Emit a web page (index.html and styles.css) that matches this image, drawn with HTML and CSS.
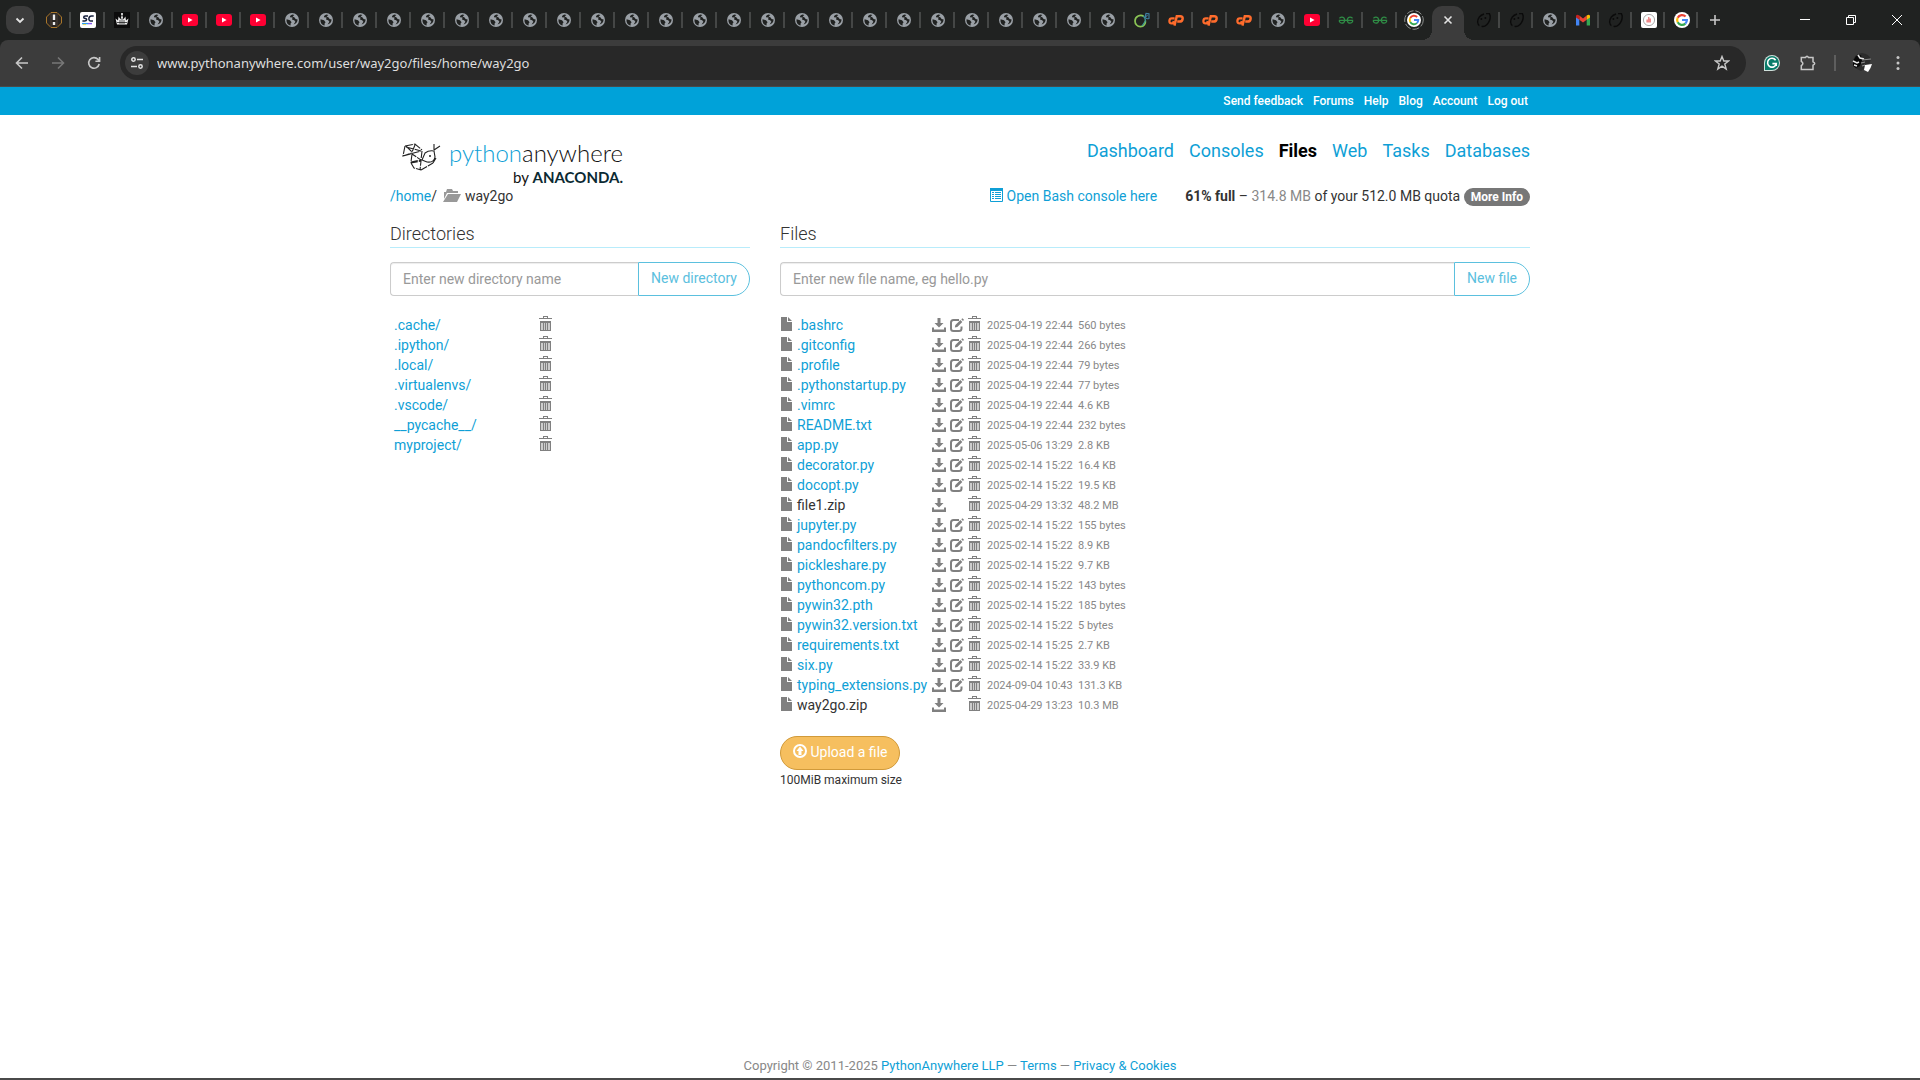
FILE: index.html
```html
<!DOCTYPE html>
<html lang="en">
<head>
	<meta charset="utf-8">
	<title>Files : /home/way2go : PythonAnywhere</title>
	<link rel="stylesheet" href="styles.css">
</head>
<body>

	<!-- icon sprite -->
	<svg class="sprite" aria-hidden="true">
		<symbol id="globe" viewBox="0 0 16 16">
			<circle cx="8" cy="8" r="7" fill="#9aa0a6"/>
			<path d="M2.6 7.2L6 8.2L7.6 10.2L6.6 11.4V13.6C3.8 13 2 10.4 2.6 7.2z" fill="#202221"/>
			<path d="M8.4 2.4C7 3 5.8 3.6 6 5.2L8.6 5.6L8 7.4L10.2 8.2L11.4 9.8L9.6 12.6C12 12 13.6 10 13.6 7.6L11.6 7L10.6 5.4L8.6 4.4L10.4 3z" fill="#202221"/>
		</symbol>
		<symbol id="youtube" viewBox="0 0 16 16">
			<rect x="0" y="2" width="16" height="12" rx="3" fill="#ff0033"/>
			<path d="M6 5.5L10.6 8L6 10.5z" fill="#fff"/>
		</symbol>
		<symbol id="warn" viewBox="0 0 16 16">
			<path d="M5 .5H11L15.5 5V11L11 15.5H5L.5 11V5z" fill="#292522" stroke="#a8762a"/>
			<path d="M5 1V15M11 1V15" stroke="#4a4036"/>
			<path d="M8 2.5V8M8 10V13" stroke="#eee" stroke-width="2.400"/>
		</symbol>
		<symbol id="sc" viewBox="0 0 16 16">
			<rect width="16" height="16" rx="2" fill="#fff"/>
			<path d="M8 4H5.200Q3.700 4 3.700 5.200Q3.700 6.400 5.400 6.500Q6.800 6.700 6.600 7.800Q6.300 9 4.800 9H2.400M13.700 4H11.500Q9.200 4 8.900 6.500Q8.800 9 10.800 9H13" fill="none" stroke="#17213d" stroke-width="1.500"/>
			<path d="M2 11.6H8" stroke="#2c9bf0" stroke-width="1.4"/><path d="M8 11.6H12" stroke="#8a5cf0" stroke-width="1.4"/><path d="M3 12.6H6" stroke="#e6d94c"/>
		</symbol>
		<symbol id="crown" viewBox="0 0 16 16">
			<rect width="16" height="16" fill="#0c0c0c"/>
			<path d="M3 12.5L1.5 6.5L4 8.5L4.6 4.5L6.6 7.5L8 2L9.4 7.5L11.4 4.5L12 8.5L14.5 6.5L13 12.5z" fill="#eee"/>
			<path d="M3 10.5H13M6 8V12M10 8V12M8 6V12" stroke="#0c0c0c" stroke-width=".7"/>
			<circle cx="8" cy="2" r="1" fill="#fff"/>
		</symbol>
		<symbol id="leaf" viewBox="0 0 16 16">
			<path d="M9.6 4.2C6.6 2.2 1 4 1 9C1 12.2 3.4 14.6 6.4 14.6C10 14.6 11.8 11.6 11.4 8.6" fill="none" stroke="#8ac455" stroke-width="1.7"/>
			<path d="M9 4C11 5.2 11.4 7 11.4 9L8 14" fill="none" stroke="#3d9c94" stroke-width="1.2"/>
			<path d="M11 5L12 1.4L15 1.8V6.4Q12.4 7.6 11 5L13.6 3.4" fill="none" stroke="#407fa3" stroke-width="1.1"/>
		</symbol>
		<symbol id="cpanel" viewBox="0 0 16 16">
			<path d="M6.6 6.4H3.8Q1.6 6.4 1.4 8.8Q1.2 11.4 3.6 11.4H5L5.8 9.2" fill="none" stroke="#ff6c2c" stroke-width="2.3"/>
			<path d="M6.4 13.6L8.8 4.2H12.2Q14.9 4.2 14.6 6.8Q14.3 9.6 11.4 9.6H9.2" fill="none" stroke="#ff6c2c" stroke-width="2.5"/>
		</symbol>
		<symbol id="gfg" viewBox="0 0 16 16">
			<path d="M1.4 6.2Q4 4.2 6 6Q7.6 8.4 5.8 10.6Q3 12 1.4 9.6V8.4H14.6V9.6Q13 12 10.2 10.6Q8.4 8.4 10 6Q12 4.2 14.6 6.2" fill="none" stroke="#2f8d46" stroke-width="1.2"/>
		</symbol>
		<symbol id="google" viewBox="0 0 16 16">
			<circle cx="8" cy="8" r="8" fill="#fff"/>
			<g fill="none" stroke-width="2.2">
				<path d="M11.6 4.6A4.9 4.9 0 0 0 3.7 5.7" stroke="#ea4335"/>
				<path d="M3.7 5.7A4.9 4.9 0 0 0 3.7 10.3" stroke="#fbbc05"/>
				<path d="M3.7 10.3A4.9 4.9 0 0 0 11.3 11.6" stroke="#34a853"/>
				<path d="M11.3 11.6A4.9 4.9 0 0 0 12.9 8H8" stroke="#4285f4"/>
			</g>
		</symbol>
		<symbol id="hook" viewBox="0 0 16 16">
			<path d="M8 2Q2 4 1.6 10Q2 13 3.4 13.6M10 1.6H13.4L14.2 4Q14.4 9 11 12.4Q8.4 15 5.6 14.4" fill="none" stroke="#0b0b0b" stroke-width="1.4"/>
			<circle cx="5.4" cy="7" r="1" fill="#0b0b0b"/><circle cx="9.4" cy="6" r="1" fill="#0b0b0b"/>
		</symbol>
		<symbol id="gmail" viewBox="0 0 16 16">
			<path d="M1 4V13.5H4.3V7z" fill="#4285f4"/><path d="M15 4V13.5H11.7V7z" fill="#34a853"/>
			<path d="M4.3 3.5L8 6.4L11.7 3.5V7.8L8 10.6L4.3 7.8z" fill="#ea4335"/>
			<path d="M1 4Q1.6 1.6 4.3 3.5V7.8L1 5.4z" fill="#c5221f"/><path d="M15 4Q14.4 1.6 11.7 3.5V7.8L15 5.4z" fill="#fbbc04"/>
		</symbol>
		<symbol id="seal" viewBox="0 0 16 16">
			<rect width="16" height="16" rx="2" fill="#fff"/>
			<circle cx="8" cy="8" r="5.6" fill="none" stroke="#aaa"/>
			<path d="M5.4 10.6V7.6H7V5H8.4V6.4H10V10.6z" fill="#f08a8a"/>
		</symbol>

		<!-- glyphs used by the page itself -->
		<symbol id="file" viewBox="0 0 11 14"><path d="M0 0H6V5H11V14H0zM7 0L11 4H7z"/></symbol>
		<symbol id="download" viewBox="0 0 14 14"><path d="M5.5 0H8.5V5H11.5L7 9.6L2.5 5H5.5zM0 9.5H2V11.5H12V9.5H14V14H0z"/></symbol>
		<symbol id="edit" viewBox="0 0 14 14">
			<path d="M9 2H3.500Q1 2 1 4.500V10.500Q1 13 3.500 13H9Q11.500 13 11.500 10.500V8.500" fill="none" stroke="currentColor" stroke-width="2"/>
			<path d="M4.800 9.600L5.400 7L10.400 2L12.300 3.900L7.300 9z"/><path d="M11.300 1.200L12.400 .200L14 1.800L13 2.900z"/>
		</symbol>
		<symbol id="trash" viewBox="0 0 13 15">
			<path d="M4 0H9V2H13V3H0V2H4zM5 1V2H8V1zM1 5H12V7H1z" fill-rule="evenodd"/>
			<path d="M1 7H12V15H1z" opacity=".4"/>
			<path d="M1 7H2V14H11V7H12V15H1zM4 7H5V14H4zM6 7H7V14H6zM8 7H9V14H8z"/>
		</symbol>
	</svg>

	<header class="browser">
		<div class="tabstrip">
			<button class="tabsearch" aria-label="Search tabs"><svg width="12" height="12" viewBox="0 0 12 12"><path d="M2.500 4.500L6 8L9.500 4.500" fill="none" stroke="#e3e3e3" stroke-width="1.800"/></svg></button>
			<div class="tabs">
				<span class="tab"><svg><use href="#warn"/></svg></span>
				<span class="tab"><svg><use href="#sc"/></svg></span>
				<span class="tab"><svg><use href="#crown"/></svg></span>
				<span class="tab"><svg><use href="#globe"/></svg></span>
				<span class="tab"><svg><use href="#youtube"/></svg></span>
				<span class="tab"><svg><use href="#youtube"/></svg></span>
				<span class="tab"><svg><use href="#youtube"/></svg></span>
				<span class="tab"><svg><use href="#globe"/></svg></span>
				<span class="tab"><svg><use href="#globe"/></svg></span>
				<span class="tab"><svg><use href="#globe"/></svg></span>
				<span class="tab"><svg><use href="#globe"/></svg></span>
				<span class="tab"><svg><use href="#globe"/></svg></span>
				<span class="tab"><svg><use href="#globe"/></svg></span>
				<span class="tab"><svg><use href="#globe"/></svg></span>
				<span class="tab"><svg><use href="#globe"/></svg></span>
				<span class="tab"><svg><use href="#globe"/></svg></span>
				<span class="tab"><svg><use href="#globe"/></svg></span>
				<span class="tab"><svg><use href="#globe"/></svg></span>
				<span class="tab"><svg><use href="#globe"/></svg></span>
				<span class="tab"><svg><use href="#globe"/></svg></span>
				<span class="tab"><svg><use href="#globe"/></svg></span>
				<span class="tab"><svg><use href="#globe"/></svg></span>
				<span class="tab"><svg><use href="#globe"/></svg></span>
				<span class="tab"><svg><use href="#globe"/></svg></span>
				<span class="tab"><svg><use href="#globe"/></svg></span>
				<span class="tab"><svg><use href="#globe"/></svg></span>
				<span class="tab"><svg><use href="#globe"/></svg></span>
				<span class="tab"><svg><use href="#globe"/></svg></span>
				<span class="tab"><svg><use href="#globe"/></svg></span>
				<span class="tab"><svg><use href="#globe"/></svg></span>
				<span class="tab"><svg><use href="#globe"/></svg></span>
				<span class="tab"><svg><use href="#globe"/></svg></span>
				<span class="tab"><svg><use href="#leaf"/></svg></span>
				<span class="tab"><svg><use href="#cpanel"/></svg></span>
				<span class="tab"><svg><use href="#cpanel"/></svg></span>
				<span class="tab"><svg><use href="#cpanel"/></svg></span>
				<span class="tab"><svg><use href="#globe"/></svg></span>
				<span class="tab"><svg><use href="#youtube"/></svg></span>
				<span class="tab"><svg><use href="#gfg"/></svg></span>
				<span class="tab"><svg><use href="#gfg"/></svg></span>
				<span class="tab plain"><svg class="ringed" viewBox="0 0 20 20"><circle cx="10" cy="10" r="9.300" fill="none" stroke="#8a8d8c" stroke-dasharray="7 2"/><use href="#google" x="3" y="3" width="14" height="14"/></svg></span>
			</div>
			<button class="tab-active" aria-label="Close tab"><svg width="10" height="10" viewBox="0 0 10 10"><path d="M1.500 1.500L8.500 8.500M8.500 1.500L1.500 8.500" stroke="#e3e3e3" stroke-width="1.600"/></svg></button>
			<div class="tabs narrow">
				<span class="tab"><svg><use href="#hook"/></svg></span>
				<span class="tab"><svg><use href="#hook"/></svg></span>
				<span class="tab"><svg><use href="#globe"/></svg></span>
				<span class="tab"><svg><use href="#gmail"/></svg></span>
				<span class="tab"><svg><use href="#hook"/></svg></span>
				<span class="tab"><svg><use href="#seal"/></svg></span>
				<span class="tab"><svg><use href="#google"/></svg></span>
			</div>
			<button class="newtab" aria-label="New tab"><svg width="10" height="10" viewBox="0 0 10 10"><path d="M5 0V10M0 5H10" stroke="#c7c7c7" stroke-width="1.600"/></svg></button>
			<div class="winbtns">
				<button aria-label="Minimize"><svg width="10" height="10"><path d="M0 4.500H10" stroke="#fff"/></svg></button>
				<button aria-label="Restore"><svg width="10" height="10"><path d="M.5 2.500H7.500V9.500H.5zM2.500 2V.5H9.500V7.500H8" fill="none" stroke="#fff"/></svg></button>
				<button aria-label="Close"><svg width="10" height="10"><path d="M0 0L10 10M10 0L0 10" stroke="#fff"/></svg></button>
			</div>
		</div>
		<div class="toolbar">
			<button class="tool" aria-label="Back"><svg viewBox="0 0 16 16"><path d="M14 8H3M8 2.500L2.500 8L8 13.500" fill="none" stroke="#c7c7c7" stroke-width="1.600"/></svg></button>
			<button class="tool" aria-label="Forward"><svg viewBox="0 0 16 16"><path d="M2 8H13M8 2.500L13.500 8L8 13.500" fill="none" stroke="#777" stroke-width="1.600"/></svg></button>
			<button class="tool" aria-label="Reload"><svg viewBox="0 0 16 16"><path d="M13.200 9A5.300 5.300 0 1 1 12 4.400L13 5.500M13.600 2V6.200H9.400" fill="none" stroke="#c7c7c7" stroke-width="1.600"/></svg></button>
			<div class="omnibox">
				<button class="siteinfo" aria-label="View site information"><svg width="14" height="14" viewBox="0 0 14 14" fill="none" stroke="#e3e3e3" stroke-width="1.500"><circle cx="3.500" cy="3.500" r="1.700"/><path d="M7 3.500H13M1 10.500H7"/><circle cx="10.500" cy="10.500" r="1.700"/></svg></button>
				<input class="url" type="text" aria-label="Address" value="www.pythonanywhere.com/user/way2go/files/home/way2go">
				<button class="star" aria-label="Bookmark"><svg width="16" height="16" viewBox="0 0 16 16"><path d="M8 1.500L9.800 6H14.600L10.800 9L12.200 14L8 11.100L3.800 14L5.200 9L1.400 6H6.200z" fill="none" stroke="#c7c7c7" stroke-width="1.400"/></svg></button>
			</div>
			<div class="extensions">
				<button class="tool" aria-label="Grammarly"><svg viewBox="0 0 16 16"><path d="M8 0A8 8 0 1 1 8 16H0V8A8 8 0 0 1 8 0z" fill="#cfe0db"/><path d="M8 1A7 7 0 1 1 8 15H1V8A7 7 0 0 1 8 1z" fill="#0a7c6a"/><path d="M11.600 5.200A4.400 4.400 0 1 0 12.300 8.600H8.400M12.200 8.600V11" fill="none" stroke="#fff" stroke-width="1.600"/></svg></button>
				<button class="tool" aria-label="Extensions"><svg viewBox="0 0 16 16"><path d="M1.300 2.500H5.500Q7 0 8.500 2.500H13V6.800Q16.400 8.500 13 10.200V14.600H1.300V10.600Q4.400 8.500 1.300 6.400z" fill="none" stroke="#c7c7c7" stroke-width="1.500"/></svg></button>
				<span class="divider"></span>
				<button class="tool avatar" aria-label="Profile"><svg viewBox="0 0 20 20"><path d="M1 7Q3 1 10 0Q17 1 19 6L17 12L9 18L3 15Z" fill="#2c2c2c"/><path d="M1 8L4 3L9 2L10 7L8 13L4 15L1 13Z" fill="#080808"/><path d="M6 2L8 5L12 6M1 8L5 10L7 9M2 12L5 13" stroke="#e8e8e8" stroke-width="1.500" fill="none"/><path d="M10 7L19 6M9 10L13 9M10 13L13 12" stroke="#8f8f8f" stroke-width="1.200"/><path d="M13 12L20 11Q19 15 16 19L12 17Z" fill="#fff"/></svg></button>
				<button class="tool" aria-label="Menu"><svg viewBox="0 0 16 16" fill="#c7c7c7"><circle cx="8" cy="2.500" r="1.500"/><circle cx="8" cy="8" r="1.500"/><circle cx="8" cy="13.500" r="1.500"/></svg></button>
			</div>
		</div>
	</header>

	<nav class="topbar">
		<div class="container toplinks">
			<a href="#">Send feedback</a>
			<a href="#">Forums</a>
			<a href="#">Help</a>
			<a href="#">Blog</a>
			<a href="#">Account</a>
			<a href="#">Log out</a>
		</div>
	</nav>

	<main class="container">
		<div class="masthead">
			<a class="logo" href="#">
				<svg class="snake" width="39" height="28" viewBox="0 0 39 28" fill="none" stroke="#222" stroke-width="1.100">
					<path d="M3 3L13 1L20 7M3 3L1 13L10 10M4 3L10 9L13 2M4 4L19 8M1 13L19 8" stroke-dasharray="8 1"/>
					<path d="M10 11L9 19L19 17L10 11M20 8L19 17M9 20L12 25L19 27M9 20L19 18L18 27M19 27L31 20" stroke-dasharray="7 1"/>
					<path d="M20 17L23 10Q27 7 32 8L33 14Q32 20 25 19L20 17M32 7L32 1M32 7L38 3M31 20L34 15"/>
					<circle cx="28" cy="13" r="1" fill="#222" stroke="none"/>
				</svg>
				<span class="wordmark">
					<span class="name"><b>python</b>anywhere</span>
					<span class="by">by <strong>ANACONDA.</strong></span>
				</span>
			</a>
			<nav class="mainnav">
				<a href="#">Dashboard</a>
				<a href="#">Consoles</a>
				<a href="#" class="active">Files</a>
				<a href="#">Web</a>
				<a href="#">Tasks</a>
				<a href="#">Databases</a>
			</nav>
		</div>

		<div class="pathrow">
			<div class="crumbs">
				<a href="#">/home</a>/
				<svg width="18" height="13" viewBox="0 0 18 13" fill="#999"><path d="M1 3H3L4 0H9L10 2H15V4H4L1 10zM5 5H18L14 13H0z"/></svg>
				way2go
			</div>
			<div class="quota">
				<a class="bash" href="#"><svg width="13" height="14" viewBox="0 0 13 14"><path d="M.5 .5H12.500V13.500H.5z" fill="none" stroke="currentColor"/><path d="M0 0H13V3H0zM2 4H4V5H2zM5 4H11V5H5zM2 6H4V7H2zM5 6H11V7H5zM2 8H4V9H2zM5 8H11V9H5zM2 10H4V11H2zM5 10H11V11H5z"/></svg> Open Bash console here</a>
				<span><strong>61% full</strong> – <span class="muted">314.8 MB</span> of your 512.0 MB quota <a class="badge" href="#">More Info</a></span>
			</div>
		</div>

		<div class="columns">
			<section>
				<h2>Directories</h2>
				<form class="group">
					<input type="text" aria-label="New directory name" placeholder="Enter new directory name">
					<button type="button">New directory</button>
				</form>
				<table class="listing dirs">
					<tr><td class="name"><a href="#">.cache/</a></td><td><a href="#" aria-label="Delete"><svg class="trash"><use href="#trash"/></svg></a></td></tr>
					<tr><td class="name"><a href="#">.ipython/</a></td><td><a href="#" aria-label="Delete"><svg class="trash"><use href="#trash"/></svg></a></td></tr>
					<tr><td class="name"><a href="#">.local/</a></td><td><a href="#" aria-label="Delete"><svg class="trash"><use href="#trash"/></svg></a></td></tr>
					<tr><td class="name"><a href="#">.virtualenvs/</a></td><td><a href="#" aria-label="Delete"><svg class="trash"><use href="#trash"/></svg></a></td></tr>
					<tr><td class="name"><a href="#">.vscode/</a></td><td><a href="#" aria-label="Delete"><svg class="trash"><use href="#trash"/></svg></a></td></tr>
					<tr><td class="name"><a href="#">__pycache__/</a></td><td><a href="#" aria-label="Delete"><svg class="trash"><use href="#trash"/></svg></a></td></tr>
					<tr><td class="name"><a href="#">myproject/</a></td><td><a href="#" aria-label="Delete"><svg class="trash"><use href="#trash"/></svg></a></td></tr>
				</table>
			</section>

			<section>
				<h2>Files</h2>
				<form class="group">
					<input type="text" aria-label="New file name" placeholder="Enter new file name, eg hello.py">
					<button type="button">New file</button>
				</form>
				<table class="listing files">
					<tr><td class="name"><svg class="file"><use href="#file"/></svg><a href="#">.bashrc</a></td><td><a href="#" aria-label="Download"><svg><use href="#download"/></svg></a></td><td><a href="#" aria-label="Edit"><svg><use href="#edit"/></svg></a></td><td><a href="#" aria-label="Delete"><svg class="trash"><use href="#trash"/></svg></a></td><td class="date">2025-04-19 22:44</td><td class="size">560 bytes</td></tr>
					<tr><td class="name"><svg class="file"><use href="#file"/></svg><a href="#">.gitconfig</a></td><td><a href="#" aria-label="Download"><svg><use href="#download"/></svg></a></td><td><a href="#" aria-label="Edit"><svg><use href="#edit"/></svg></a></td><td><a href="#" aria-label="Delete"><svg class="trash"><use href="#trash"/></svg></a></td><td class="date">2025-04-19 22:44</td><td class="size">266 bytes</td></tr>
					<tr><td class="name"><svg class="file"><use href="#file"/></svg><a href="#">.profile</a></td><td><a href="#" aria-label="Download"><svg><use href="#download"/></svg></a></td><td><a href="#" aria-label="Edit"><svg><use href="#edit"/></svg></a></td><td><a href="#" aria-label="Delete"><svg class="trash"><use href="#trash"/></svg></a></td><td class="date">2025-04-19 22:44</td><td class="size">79 bytes</td></tr>
					<tr><td class="name"><svg class="file"><use href="#file"/></svg><a href="#">.pythonstartup.py</a></td><td><a href="#" aria-label="Download"><svg><use href="#download"/></svg></a></td><td><a href="#" aria-label="Edit"><svg><use href="#edit"/></svg></a></td><td><a href="#" aria-label="Delete"><svg class="trash"><use href="#trash"/></svg></a></td><td class="date">2025-04-19 22:44</td><td class="size">77 bytes</td></tr>
					<tr><td class="name"><svg class="file"><use href="#file"/></svg><a href="#">.vimrc</a></td><td><a href="#" aria-label="Download"><svg><use href="#download"/></svg></a></td><td><a href="#" aria-label="Edit"><svg><use href="#edit"/></svg></a></td><td><a href="#" aria-label="Delete"><svg class="trash"><use href="#trash"/></svg></a></td><td class="date">2025-04-19 22:44</td><td class="size">4.6 KB</td></tr>
					<tr><td class="name"><svg class="file"><use href="#file"/></svg><a href="#">README.txt</a></td><td><a href="#" aria-label="Download"><svg><use href="#download"/></svg></a></td><td><a href="#" aria-label="Edit"><svg><use href="#edit"/></svg></a></td><td><a href="#" aria-label="Delete"><svg class="trash"><use href="#trash"/></svg></a></td><td class="date">2025-04-19 22:44</td><td class="size">232 bytes</td></tr>
					<tr><td class="name"><svg class="file"><use href="#file"/></svg><a href="#">app.py</a></td><td><a href="#" aria-label="Download"><svg><use href="#download"/></svg></a></td><td><a href="#" aria-label="Edit"><svg><use href="#edit"/></svg></a></td><td><a href="#" aria-label="Delete"><svg class="trash"><use href="#trash"/></svg></a></td><td class="date">2025-05-06 13:29</td><td class="size">2.8 KB</td></tr>
					<tr><td class="name"><svg class="file"><use href="#file"/></svg><a href="#">decorator.py</a></td><td><a href="#" aria-label="Download"><svg><use href="#download"/></svg></a></td><td><a href="#" aria-label="Edit"><svg><use href="#edit"/></svg></a></td><td><a href="#" aria-label="Delete"><svg class="trash"><use href="#trash"/></svg></a></td><td class="date">2025-02-14 15:22</td><td class="size">16.4 KB</td></tr>
					<tr><td class="name"><svg class="file"><use href="#file"/></svg><a href="#">docopt.py</a></td><td><a href="#" aria-label="Download"><svg><use href="#download"/></svg></a></td><td><a href="#" aria-label="Edit"><svg><use href="#edit"/></svg></a></td><td><a href="#" aria-label="Delete"><svg class="trash"><use href="#trash"/></svg></a></td><td class="date">2025-02-14 15:22</td><td class="size">19.5 KB</td></tr>
					<tr><td class="name"><svg class="file"><use href="#file"/></svg>file1.zip</td><td><a href="#" aria-label="Download"><svg><use href="#download"/></svg></a></td><td></td><td><a href="#" aria-label="Delete"><svg class="trash"><use href="#trash"/></svg></a></td><td class="date">2025-04-29 13:32</td><td class="size">48.2 MB</td></tr>
					<tr><td class="name"><svg class="file"><use href="#file"/></svg><a href="#">jupyter.py</a></td><td><a href="#" aria-label="Download"><svg><use href="#download"/></svg></a></td><td><a href="#" aria-label="Edit"><svg><use href="#edit"/></svg></a></td><td><a href="#" aria-label="Delete"><svg class="trash"><use href="#trash"/></svg></a></td><td class="date">2025-02-14 15:22</td><td class="size">155 bytes</td></tr>
					<tr><td class="name"><svg class="file"><use href="#file"/></svg><a href="#">pandocfilters.py</a></td><td><a href="#" aria-label="Download"><svg><use href="#download"/></svg></a></td><td><a href="#" aria-label="Edit"><svg><use href="#edit"/></svg></a></td><td><a href="#" aria-label="Delete"><svg class="trash"><use href="#trash"/></svg></a></td><td class="date">2025-02-14 15:22</td><td class="size">8.9 KB</td></tr>
					<tr><td class="name"><svg class="file"><use href="#file"/></svg><a href="#">pickleshare.py</a></td><td><a href="#" aria-label="Download"><svg><use href="#download"/></svg></a></td><td><a href="#" aria-label="Edit"><svg><use href="#edit"/></svg></a></td><td><a href="#" aria-label="Delete"><svg class="trash"><use href="#trash"/></svg></a></td><td class="date">2025-02-14 15:22</td><td class="size">9.7 KB</td></tr>
					<tr><td class="name"><svg class="file"><use href="#file"/></svg><a href="#">pythoncom.py</a></td><td><a href="#" aria-label="Download"><svg><use href="#download"/></svg></a></td><td><a href="#" aria-label="Edit"><svg><use href="#edit"/></svg></a></td><td><a href="#" aria-label="Delete"><svg class="trash"><use href="#trash"/></svg></a></td><td class="date">2025-02-14 15:22</td><td class="size">143 bytes</td></tr>
					<tr><td class="name"><svg class="file"><use href="#file"/></svg><a href="#">pywin32.pth</a></td><td><a href="#" aria-label="Download"><svg><use href="#download"/></svg></a></td><td><a href="#" aria-label="Edit"><svg><use href="#edit"/></svg></a></td><td><a href="#" aria-label="Delete"><svg class="trash"><use href="#trash"/></svg></a></td><td class="date">2025-02-14 15:22</td><td class="size">185 bytes</td></tr>
					<tr><td class="name"><svg class="file"><use href="#file"/></svg><a href="#">pywin32.version.txt</a></td><td><a href="#" aria-label="Download"><svg><use href="#download"/></svg></a></td><td><a href="#" aria-label="Edit"><svg><use href="#edit"/></svg></a></td><td><a href="#" aria-label="Delete"><svg class="trash"><use href="#trash"/></svg></a></td><td class="date">2025-02-14 15:22</td><td class="size">5 bytes</td></tr>
					<tr><td class="name"><svg class="file"><use href="#file"/></svg><a href="#">requirements.txt</a></td><td><a href="#" aria-label="Download"><svg><use href="#download"/></svg></a></td><td><a href="#" aria-label="Edit"><svg><use href="#edit"/></svg></a></td><td><a href="#" aria-label="Delete"><svg class="trash"><use href="#trash"/></svg></a></td><td class="date">2025-02-14 15:25</td><td class="size">2.7 KB</td></tr>
					<tr><td class="name"><svg class="file"><use href="#file"/></svg><a href="#">six.py</a></td><td><a href="#" aria-label="Download"><svg><use href="#download"/></svg></a></td><td><a href="#" aria-label="Edit"><svg><use href="#edit"/></svg></a></td><td><a href="#" aria-label="Delete"><svg class="trash"><use href="#trash"/></svg></a></td><td class="date">2025-02-14 15:22</td><td class="size">33.9 KB</td></tr>
					<tr><td class="name"><svg class="file"><use href="#file"/></svg><a href="#">typing_extensions.py</a></td><td><a href="#" aria-label="Download"><svg><use href="#download"/></svg></a></td><td><a href="#" aria-label="Edit"><svg><use href="#edit"/></svg></a></td><td><a href="#" aria-label="Delete"><svg class="trash"><use href="#trash"/></svg></a></td><td class="date">2024-09-04 10:43</td><td class="size">131.3 KB</td></tr>
					<tr><td class="name"><svg class="file"><use href="#file"/></svg>way2go.zip</td><td><a href="#" aria-label="Download"><svg><use href="#download"/></svg></a></td><td></td><td><a href="#" aria-label="Delete"><svg class="trash"><use href="#trash"/></svg></a></td><td class="date">2025-04-29 13:23</td><td class="size">10.3 MB</td></tr>
				</table>
				<button class="upload" type="button"><svg width="14" height="14" viewBox="0 0 14 14"><circle cx="7" cy="7" r="6" fill="none" stroke="#fff" stroke-width="2"/><path d="M7 2.500L10.500 7H8.500V11H5.500V7H3.500z" fill="#fff"/></svg> Upload a file</button>
				<div class="hint">100MiB maximum size</div>
			</section>
		</div>
	</main>

	<footer class="footer">Copyright © 2011-2025 <a href="#">PythonAnywhere LLP</a> — <a href="#">Terms</a> — <a href="#">Privacy &amp; Cookies</a></footer>

</body>
</html>
```
FILE: styles.css
```css
* {
	box-sizing: border-box;
}

body {
	margin: 0;
	min-height: 100vh;
	display: flex;
	flex-direction: column;
	background: #fff;
	color: #333;
	font-family: Roboto, "Liberation Sans", sans-serif;
	font-size: 14px;
	line-height: 20px;
	border-bottom: 2px solid #4a4a4a;
}

a {
	color: #0f9fd6;
	text-decoration: none;
}

button {
	padding: 0;
	border: 0;
	background: none;
	font: inherit;
}

.sprite { display: none; }

/* browser chrome */
.browser {
	background: #202221;
}

.tabstrip {
	display: flex;
	height: 40px;
	padding-left: 6px;
}

.tabsearch {
	width: 28px;
	height: 28px;
	margin: 6px 3px 0 0;
	border-radius: 10px;
	background: #3c3c3c;
	display: flex;
	align-items: center;
	justify-content: center;
}

.tabs { display: flex; }

.tab {
	width: 34px;
	height: 40px;
	display: flex;
	align-items: center;
	justify-content: center;
	background: linear-gradient(#454746, #454746) right center / 2px 16px no-repeat;
}

.tab svg {
	width: 16px;
	height: 16px;
}

.tab svg.ringed {
	width: 20px;
	height: 20px;
}

.tab.plain { background: none; }

.narrow { padding-left: 3px; }

.narrow .tab { width: 33px; }

.tab-active {
	position: relative;
	width: 32px;
	margin: 6px 0 0 1px;
	border-radius: 10px 10px 0 0;
	background: #3c3c3c;
	display: flex;
	align-items: center;
	justify-content: center;
	padding-bottom: 6px;
}

/* the outward curves at the foot of the open tab */
.tab-active:before,
.tab-active:after {
	content: "";
	position: absolute;
	bottom: 0;
	width: 10px;
	height: 10px;
}

.tab-active:before {
	left: -10px;
	background: radial-gradient(circle at 0 0, transparent 10px, #3c3c3c 10px);
}

.tab-active:after {
	right: -10px;
	background: radial-gradient(circle at 100% 0, transparent 10px, #3c3c3c 10px);
}

.newtab {
	width: 34px;
	display: flex;
	align-items: center;
	justify-content: center;
}

.winbtns {
	display: flex;
	margin-left: auto;
}

.winbtns button {
	width: 46px;
}

.toolbar {
	height: 47px;
	display: flex;
	align-items: center;
	padding: 0 4px 1px;
	border-bottom: 1px solid #4a4a4a;
	border-radius: 8px 8px 0 0;
	background: #3c3c3c;
}

.tool {
	width: 36px;
	height: 36px;
	display: flex;
	align-items: center;
	justify-content: center;
}

.tool svg {
	width: 16px;
	height: 16px;
}

.tool.avatar svg {
	width: 20px;
	height: 20px;
}

.omnibox {
	flex: 1;
	height: 34px;
	margin-left: 8px;
	padding: 0 16px 0 5px;
	border-radius: 17px;
	background: #282828;
	display: flex;
	align-items: center;
}

.siteinfo {
	width: 24px;
	height: 24px;
	border-radius: 12px;
	background: #3c3c3c;
	display: flex;
	align-items: center;
	justify-content: center;
}

.url {
	flex: 1;
	margin-left: 8px;
	padding: 0;
	border: 0;
	background: none;
	color: #dedede;
	font: 13px "Noto Sans", "Open Sans", sans-serif;
}

.star { display: flex; }

.extensions {
	display: flex;
	align-items: center;
	margin-left: 8px;
}

.divider {
	width: 2px;
	height: 16px;
	margin: 0 8px;
	background: #5e5e5e;
}

/* page */
.container {
	width: 100%;
	max-width: 1170px;
	margin: 0 auto;
	padding: 0 15px;
}

.topbar {
	background: #00a2d9;
	font-size: 12px;
	font-weight: 500;
	line-height: 28px;
}

.toplinks {
	display: flex;
	justify-content: flex-end;
	gap: 10px;
	padding-right: 17px;
}

.toplinks a { color: #fff; }

.masthead {
	display: flex;
	justify-content: space-between;
	align-items: flex-start;
	height: 71px;
	padding-top: 26px;
}

.logo {
	display: flex;
	gap: 8px;
	padding-left: 12px;
	color: #111;
}

.snake { margin-top: 2px; }

.wordmark {
	display: flex;
	flex-direction: column;
	align-items: flex-end;
	font-family: Lato, sans-serif;
}

.wordmark .name {
	font-size: 24px;
	line-height: 24px;
	font-weight: 300;
}

.wordmark .name b {
	font-weight: 300;
	color: #0f9fd6;
}

.wordmark .by {
	font-size: 15px;
	line-height: 24px;
}

.wordmark strong {
	font-weight: 700;
	color: #0b2a33;
}

.mainnav {
	display: flex;
	gap: 15px;
	font-size: 18px;
}

.mainnav .active {
	color: #000;
	font-weight: bold;
}

.pathrow {
	display: flex;
	justify-content: space-between;
}

.crumbs svg {
	margin: 0 0 0 3px;
	vertical-align: -1px;
}

.quota {
	display: flex;
	gap: 28px;
}

.bash svg {
	fill: currentColor;
	vertical-align: -1px;
}

.muted { color: #888; }

.badge {
	display: inline-block;
	padding: 3px 7px;
	border-radius: 10px;
	background: #777;
	color: #fff;
	font-size: 12px;
	font-weight: bold;
	line-height: 12px;
}

.columns {
	display: grid;
	grid-template-columns: 360px 1fr;
	gap: 30px;
	padding-top: 16px;
}

h2 {
	margin: 0 0 14px;
	padding-bottom: 1px;
	border-bottom: 1px solid #b8ecfb;
	font-size: 18px;
	font-weight: 300;
	line-height: 24px;
}

.group {
	display: flex;
	height: 34px;
	margin: 0 0 19px;
}

.group input {
	flex: 1;
	min-width: 0;
	padding: 0 12px;
	border: 1px solid #ccc;
	border-right: 0;
	border-radius: 4px 0 0 4px;
	box-shadow: inset 0 1px 1px rgba(0, 0, 0, .075);
	font: inherit;
}

.group input::placeholder { color: #999; }

.group button {
	padding: 0 12px 2px;
	border: 1px solid #5bc0de;
	border-radius: 0 17px 17px 0;
	color: #5bc0de;
}

.listing {
	border-collapse: collapse;
	table-layout: fixed;
}

.listing td {
	height: 20px;
	padding: 0 0 1px;
	white-space: nowrap;
	vertical-align: middle;
}

.listing td.name { padding-bottom: 0; }

.listing svg {
	display: block;
	width: 14px;
	height: 14px;
	fill: #808080;
	color: #808080;
}

.listing svg.trash {
	width: 13px;
	height: 15px;
}

.listing svg.file {
	display: inline-block;
	width: 11px;
	margin: 0 5px 0 1px;
	vertical-align: -1px;
}

.dirs { width: 165px; }

.dirs td:first-child {
	width: 149px;
	padding-left: 4px;
}

.dirs td:last-child,
.files td:nth-child(4) {
	padding-bottom: 3px;
}

.files { width: 370px; }

.files td:first-child { width: 152px; }

.files td:nth-child(2),
.files td:nth-child(4) {
	width: 18px;
}

.files td:nth-child(3) { width: 18px; }

.files td.date,
.files td.size {
	width: 92px;
	padding: 2px 0 0 1px;
	color: #888;
	font-size: 11px;
	line-height: 18px;
}

.files td.size {
	width: 72px;
	padding-left: 0;
}

.upload {
	height: 34px;
	margin-top: 21px;
	padding: 0 12px 2px;
	border: 1px solid #d19a3a;
	border-radius: 17px;
	background: #f6bf5f;
	color: #fff;
}

.upload svg { vertical-align: -1px; }

.hint {
	font-size: 12px;
}

.footer {
	margin-top: auto;
	padding-bottom: 2px;
	text-align: center;
	color: #888;
	font-size: 13px;
}
```
